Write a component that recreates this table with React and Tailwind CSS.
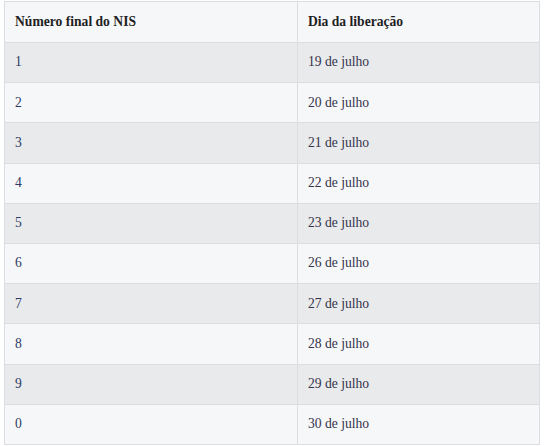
import React from 'react';

const rows = [
  ['1', '19 de julho'],
  ['2', '20 de julho'],
  ['3', '21 de julho'],
  ['4', '22 de julho'],
  ['5', '23 de julho'],
  ['6', '26 de julho'],
  ['7', '27 de julho'],
  ['8', '28 de julho'],
  ['9', '29 de julho'],
  ['0', '30 de julho'],
];

export default function App() {
  return (
    <div className="w-[548px] h-[446px] bg-white pt-[1px] pl-[4px]" style={{ fontFamily: '"Liberation Serif", serif' }}>
      <table className="w-[536px] border-collapse text-[13.6px] text-[#2b2d42]">
        <thead>
          <tr className="h-[41px] bg-[#f6f7f9]">
            <th className="w-[293px] border-[1.5px] border-[#dcdde1] pl-[10px] text-left font-bold text-[#1f1f24]">Número final do NIS</th>
            <th className="border-[1.5px] border-[#dcdde1] pl-[10px] text-left font-bold text-[#1f1f24]">Dia da liberação</th>
          </tr>
        </thead>
        <tbody>
          {rows.map(([n, d], i) => (
            <tr key={n} className={`h-[40.2px] ${i % 2 === 0 ? 'bg-[#e9eaec]' : 'bg-[#f6f7f9]'}`}>
              <td className="border-[1.5px] border-[#dcdde1] pl-[10px] text-[#2c3a63]">{n}</td>
              <td className="border-[1.5px] border-[#dcdde1] pl-[10px] text-[#33334a]">{d}</td>
            </tr>
          ))}
        </tbody>
      </table>
    </div>
  );
}
